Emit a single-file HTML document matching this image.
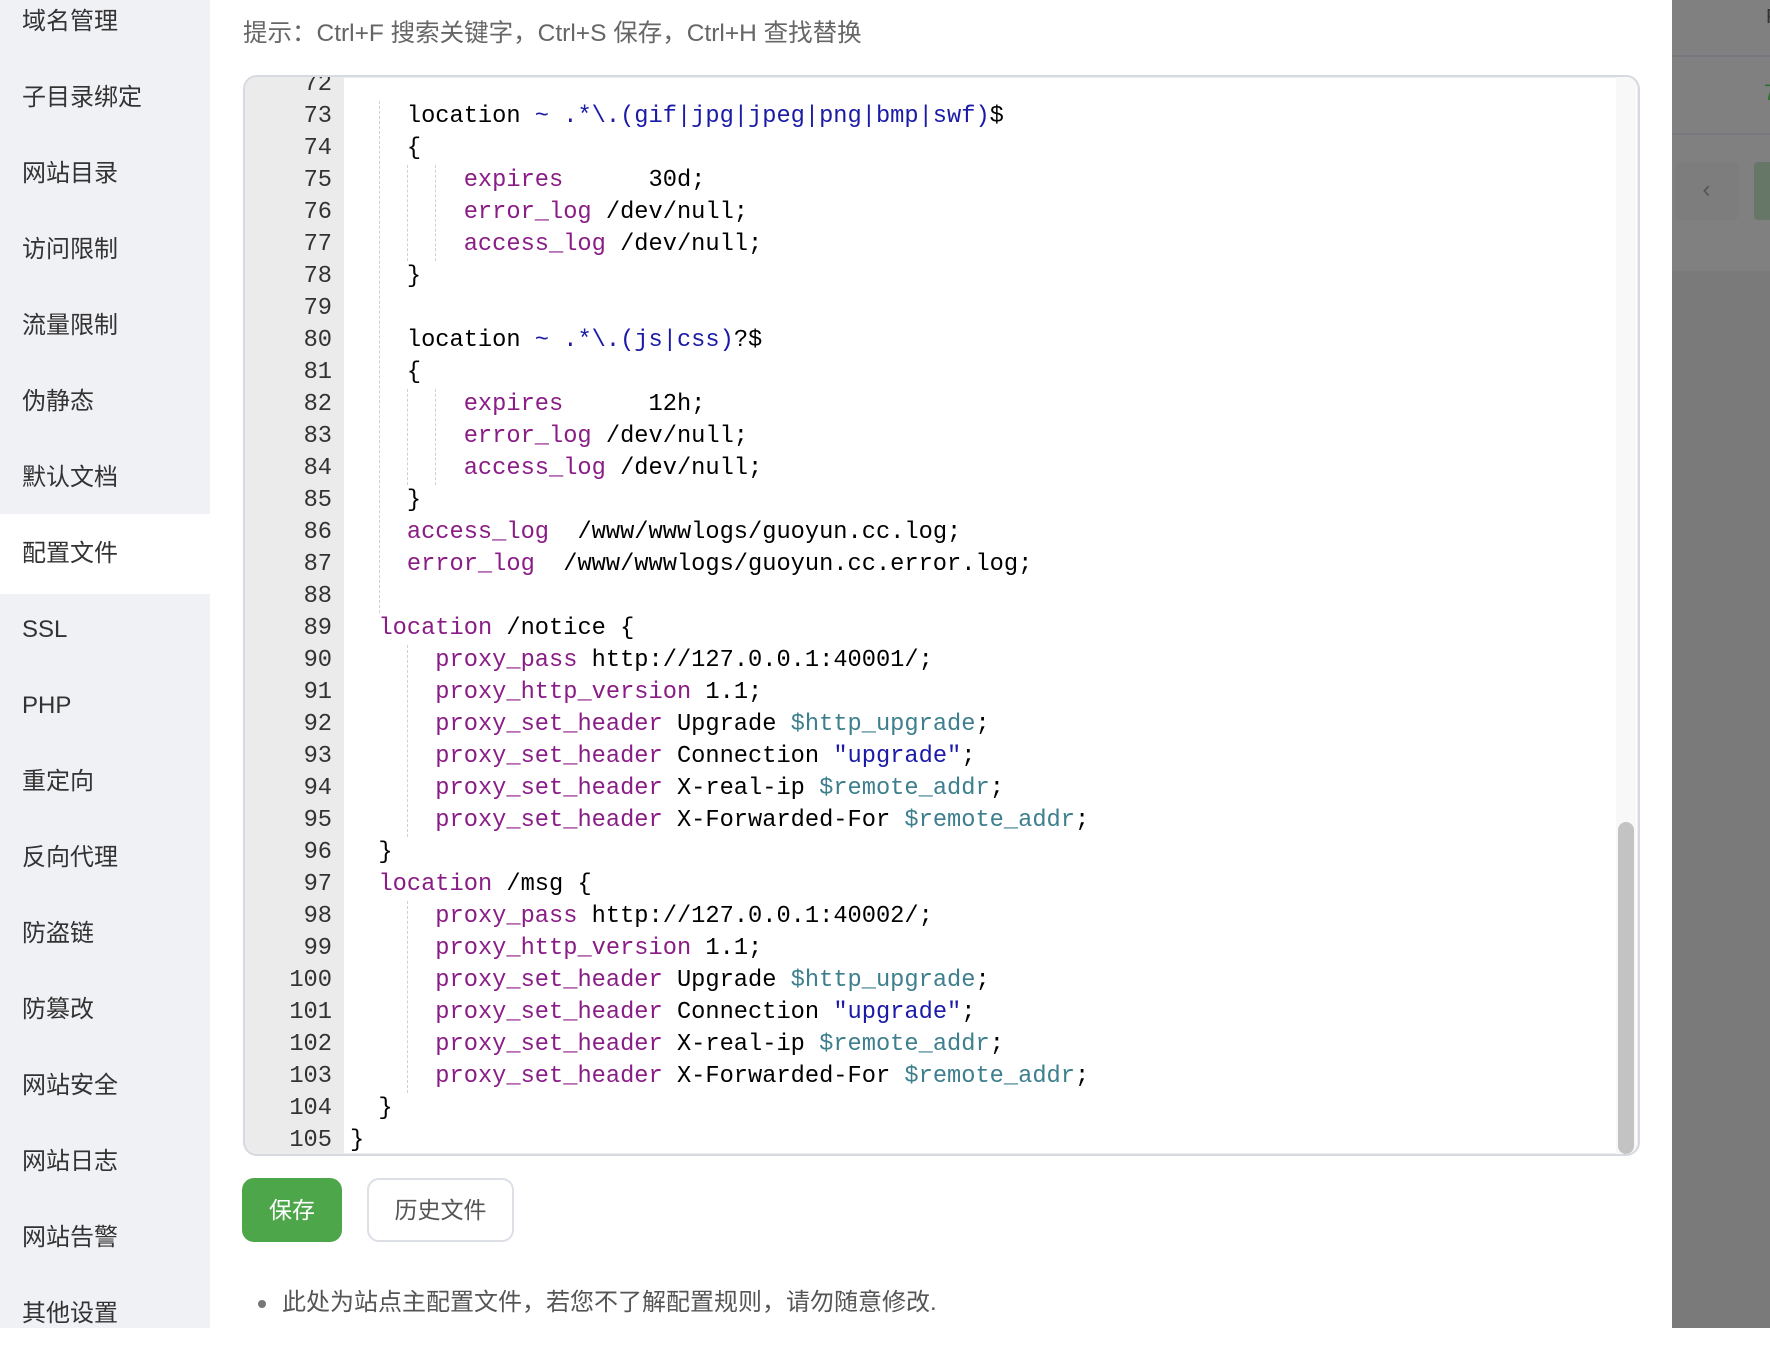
<!DOCTYPE html>
<html><head><meta charset="utf-8"><style>
*{margin:0;padding:0;box-sizing:border-box}
body{width:1770px;height:1328px;overflow:hidden;background:#fff;font-family:"Liberation Sans","Noto Sans CJK SC",sans-serif;position:relative}
.side{position:absolute;left:0;top:0;width:210px;height:1328px;background:#f0f1f5}
.side div{position:absolute;left:0;width:210px;height:80px;line-height:80px;padding-left:22px;font-size:24px;color:#333}
.side div.act{background:#fff}
.hint{position:absolute;left:243px;top:14px;font-size:24.5px;color:#666}
.ed{position:absolute;left:243px;top:75px;width:1397px;height:1081px;border:2px solid #d6d9e0;border-radius:14px;overflow:hidden;background:#fff;box-shadow:inset 0 0 0 1px #eceef2}
.gut{position:absolute;left:0;top:0;width:99px;height:100%;background:#ebebeb}
.code{position:absolute;left:0;top:-8px;font-family:"Liberation Mono",monospace;font-size:23.7px;color:#000}
.ln{height:32px;line-height:32px;white-space:pre;position:relative}
.ln .n{position:absolute;left:0;width:87px;text-align:right;color:#333}
.ln .c{position:absolute;left:105px}
.k{color:#8a1c86}.r{color:#1a1aa6}.v{color:#3d7f8d}
.g{position:absolute;border-left:1px dashed #d0d0d0;width:0}
.sb{position:absolute;left:1371px;top:0;width:20px;height:100%;background:#f8f8f9}
.th{position:absolute;left:1373px;top:745px;width:16px;height:332px;background:#c3c3c3;border-radius:8px}
.btn1{position:absolute;left:242px;top:1178px;width:100px;height:64px;background:#4ea64a;border-radius:12px;color:#fff;font-size:23px;text-align:center;line-height:64px}
.btn2{position:absolute;left:367px;top:1178px;width:147px;height:64px;border:2px solid #dcdfe6;border-radius:12px;color:#555;font-size:23px;text-align:center;line-height:60px}
.note{position:absolute;left:258px;top:1282px;font-size:24px;color:#555}
.note:before{content:"";display:inline-block;width:8px;height:8px;border-radius:50%;background:#777;margin-right:16px;vertical-align:middle}
.ov{position:absolute;left:1672px;top:0;width:98px;height:1328px;background:#7a7a7a}
</style></head><body>
<div class="side">
<div style="top:-18px">域名管理</div><div style="top:58px">子目录绑定</div><div style="top:134px">网站目录</div><div style="top:210px">访问限制</div><div style="top:286px">流量限制</div><div style="top:362px">伪静态</div><div style="top:438px">默认文档</div><div class="act" style="top:514px">配置文件</div><div style="top:590px">SSL</div><div style="top:666px">PHP</div><div style="top:742px">重定向</div><div style="top:818px">反向代理</div><div style="top:894px">防盗链</div><div style="top:970px">防篡改</div><div style="top:1046px">网站安全</div><div style="top:1122px">网站日志</div><div style="top:1198px">网站告警</div><div style="top:1274px">其他设置</div>
</div>
<div class="hint">提示：Ctrl+F 搜索关键字，Ctrl+S 保存，Ctrl+H 查找替换</div>
<div class="ed">
<div class="gut"></div>
<div class="code">
<div class="ln"><span class="n">72</span><span class="c"></span></div>
<div class="ln"><span class="n">73</span><span class="c">    location <span class="r">~ .*\.(gif|jpg|jpeg|png|bmp|swf)</span>$</span></div>
<div class="ln"><span class="n">74</span><span class="c">    {</span></div>
<div class="ln"><span class="n">75</span><span class="c">        <span class="k">expires</span>      30d;</span></div>
<div class="ln"><span class="n">76</span><span class="c">        <span class="k">error_log</span> /dev/null;</span></div>
<div class="ln"><span class="n">77</span><span class="c">        <span class="k">access_log</span> /dev/null;</span></div>
<div class="ln"><span class="n">78</span><span class="c">    }</span></div>
<div class="ln"><span class="n">79</span><span class="c"></span></div>
<div class="ln"><span class="n">80</span><span class="c">    location <span class="r">~ .*\.(js|css)</span>?$</span></div>
<div class="ln"><span class="n">81</span><span class="c">    {</span></div>
<div class="ln"><span class="n">82</span><span class="c">        <span class="k">expires</span>      12h;</span></div>
<div class="ln"><span class="n">83</span><span class="c">        <span class="k">error_log</span> /dev/null;</span></div>
<div class="ln"><span class="n">84</span><span class="c">        <span class="k">access_log</span> /dev/null;</span></div>
<div class="ln"><span class="n">85</span><span class="c">    }</span></div>
<div class="ln"><span class="n">86</span><span class="c">    <span class="k">access_log</span>  /www/wwwlogs/guoyun.cc.log;</span></div>
<div class="ln"><span class="n">87</span><span class="c">    <span class="k">error_log</span>  /www/wwwlogs/guoyun.cc.error.log;</span></div>
<div class="ln"><span class="n">88</span><span class="c"></span></div>
<div class="ln"><span class="n">89</span><span class="c">  <span class="k">location</span> /notice {</span></div>
<div class="ln"><span class="n">90</span><span class="c">      <span class="k">proxy_pass</span> http://127.0.0.1:40001/;</span></div>
<div class="ln"><span class="n">91</span><span class="c">      <span class="k">proxy_http_version</span> 1.1;</span></div>
<div class="ln"><span class="n">92</span><span class="c">      <span class="k">proxy_set_header</span> Upgrade <span class="v">$http_upgrade</span>;</span></div>
<div class="ln"><span class="n">93</span><span class="c">      <span class="k">proxy_set_header</span> Connection <span class="r">"upgrade"</span>;</span></div>
<div class="ln"><span class="n">94</span><span class="c">      <span class="k">proxy_set_header</span> X-real-ip <span class="v">$remote_addr</span>;</span></div>
<div class="ln"><span class="n">95</span><span class="c">      <span class="k">proxy_set_header</span> X-Forwarded-For <span class="v">$remote_addr</span>;</span></div>
<div class="ln"><span class="n">96</span><span class="c">  }</span></div>
<div class="ln"><span class="n">97</span><span class="c">  <span class="k">location</span> /msg {</span></div>
<div class="ln"><span class="n">98</span><span class="c">      <span class="k">proxy_pass</span> http://127.0.0.1:40002/;</span></div>
<div class="ln"><span class="n">99</span><span class="c">      <span class="k">proxy_http_version</span> 1.1;</span></div>
<div class="ln"><span class="n">100</span><span class="c">      <span class="k">proxy_set_header</span> Upgrade <span class="v">$http_upgrade</span>;</span></div>
<div class="ln"><span class="n">101</span><span class="c">      <span class="k">proxy_set_header</span> Connection <span class="r">"upgrade"</span>;</span></div>
<div class="ln"><span class="n">102</span><span class="c">      <span class="k">proxy_set_header</span> X-real-ip <span class="v">$remote_addr</span>;</span></div>
<div class="ln"><span class="n">103</span><span class="c">      <span class="k">proxy_set_header</span> X-Forwarded-For <span class="v">$remote_addr</span>;</span></div>
<div class="ln"><span class="n">104</span><span class="c">  }</span></div>
<div class="ln"><span class="n">105</span><span class="c">}</span></div>
</div>
<div class="g" style="left:134px;top:24px;height:512px"></div>
<div class="g" style="left:162px;top:88px;height:96px"></div>
<div class="g" style="left:190px;top:88px;height:96px"></div>
<div class="g" style="left:162px;top:312px;height:96px"></div>
<div class="g" style="left:190px;top:312px;height:96px"></div>
<div class="g" style="left:162px;top:568px;height:192px"></div>
<div class="g" style="left:162px;top:824px;height:192px"></div>
<div class="sb"></div><div class="th"></div>
</div>
<div class="btn1">保存</div>
<div class="btn2">历史文件</div>
<div class="note">此处为站点主配置文件，若您不了解配置规则，请勿随意修改.</div>
<div class="ov">
<div style="position:absolute;left:0;top:0;width:98px;height:271px;background:#808080"></div>
<div style="position:absolute;left:0;top:55px;width:98px;height:2px;background:#777780"></div>
<div style="position:absolute;left:0;top:133px;width:98px;height:2px;background:#777780"></div>
<div style="position:absolute;left:94px;top:6px;font-size:20px;color:#333">F</div>
<div style="position:absolute;left:92px;top:80px;font-size:22px;color:#2f6f2f">7</div>
<div style="position:absolute;left:3px;top:162px;width:63px;height:58px;background:#7d7d7d;border-radius:4px;color:#555;font-size:24px;text-align:center;line-height:56px">‹</div>
<div style="position:absolute;left:82px;top:162px;width:20px;height:58px;background:#677767;border-radius:4px"></div>
</div>
</body></html>
